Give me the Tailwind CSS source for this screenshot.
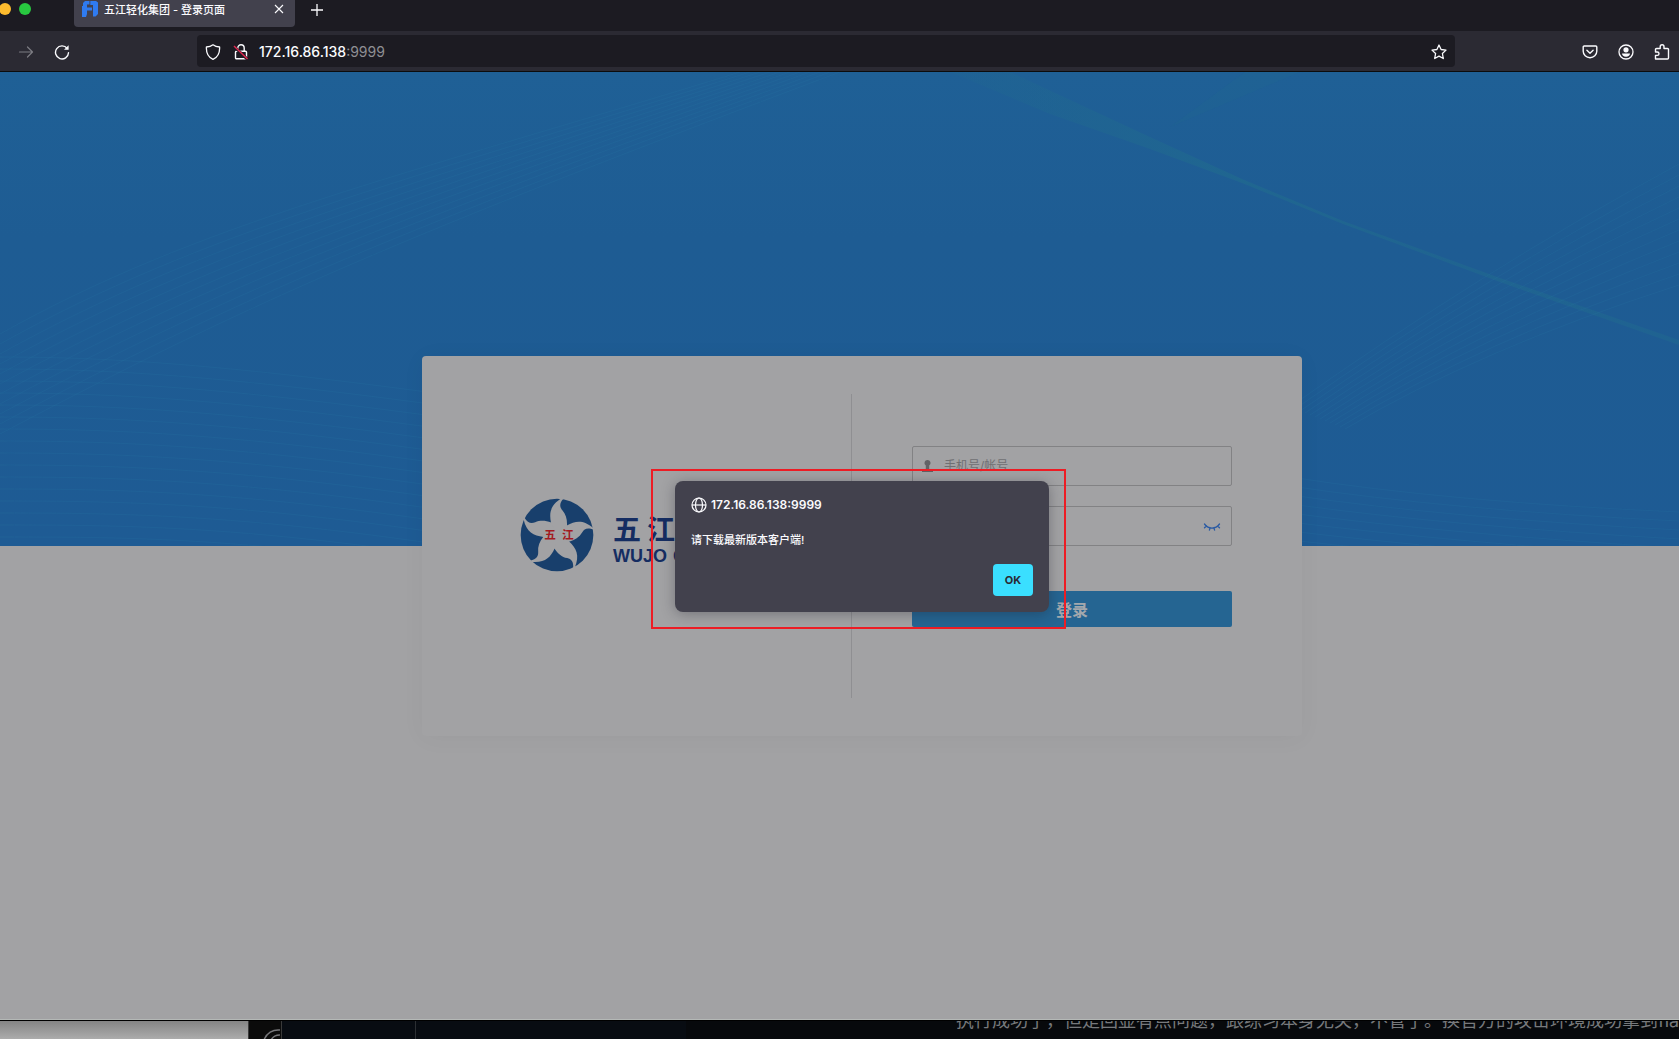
<!DOCTYPE html>
<html lang="zh-CN">
<head>
<meta charset="utf-8">
<meta name="viewport" content="width=device-width, initial-scale=1">
<title>五江轻化集团 - 登录页面</title>
<script src="https://cdn.jsdelivr.net/npm/@tailwindcss/browser@4"></script>
</head>
<body class="h-screen overflow-hidden bg-[#07090c] font-[Inter,'Noto_Sans_CJK_SC',sans-serif]">
<div class="flex h-full flex-col">

  <!-- tab strip -->
  <header class="flex h-[31px] shrink-0 items-start bg-[#1c1b22] text-[#fbfbfe]">
    <div class="flex w-[74px] shrink-0 pt-[3px]">
      <svg class="h-3 w-8" viewBox="0 0 32 12" aria-hidden="true"><circle cx="5" cy="6" r="6" fill="#febc2e"/><circle cx="25" cy="6" r="6" fill="#28c840"/></svg>
    </div>
    <div class="flex h-[27px] w-[221px] items-start rounded-b-sm bg-[#42414d] pt-px pr-2 pl-2">
      <svg class="h-4 w-4 shrink-0" viewBox="0 0 16 16" fill="#2f7bf0" aria-hidden="true"><path d="M3 0h4.500v3.500H5v3h5v3H5V13l-1 3H0V5h1V2z"/><path d="M8.300 0H14l2 1.500V13l-2.500 2.500H11V4H8.300z"/></svg>
      <span class="grow pl-[6px] text-[11px] leading-[18px] font-medium">五江轻化集团 - 登录页面</span>
      <button class="h-4 w-4" aria-label="关闭标签页"><svg viewBox="0 0 16 16" fill="none" stroke="#fbfbfe" stroke-width="1.100"><path d="M4 4l8 8M12 4l-8 8"/></svg></button>
    </div>
    <button class="mt-0.5 ml-[14px] h-4 w-4" aria-label="新建标签页"><svg viewBox="0 0 16 16" fill="none" stroke="#fbfbfe" stroke-width="1.300"><path d="M8 2v12M2 8h12"/></svg></button>
  </header>

  <!-- navigation toolbar -->
  <nav class="flex h-[41px] shrink-0 items-center border-b border-[#0c0c0d] bg-[#2b2a33] text-[#fbfbfe]">
    <div class="flex w-[197px] shrink-0 gap-5 pt-px pl-[18px]">
      <button class="h-4 w-4 text-[#7d7c83]" aria-label="前进"><svg viewBox="0 0 16 16" fill="none" stroke="currentColor" stroke-width="1.200" stroke-linecap="round" stroke-linejoin="round"><path d="M1.500 8h13M9.500 3l5 5-5 5"/></svg></button>
      <button class="h-4 w-4" aria-label="刷新"><svg viewBox="0 0 16 16" fill="none" stroke="currentColor" stroke-width="1.400" stroke-linecap="round"><path d="M13.200 4.500A6.500 6.500 0 1 0 14.500 8.700"/><path d="M14.600 1.200v4.600h-4.600z" fill="currentColor" stroke="none"/></svg></button>
    </div>
    <div class="flex h-8 grow items-center rounded bg-[#1c1b22] px-2 pt-px">
      <svg class="h-4 w-4" viewBox="0 0 16 16" fill="none" stroke="currentColor" stroke-width="1.300" stroke-linejoin="round" aria-hidden="true"><path d="M8 .8C6.200 2.200 4 2.900 1.400 3c-.3 5.500 1.600 10 6.600 12.300C13 13 14.900 8.500 14.600 3 12 2.900 9.800 2.200 8 .8z"/></svg>
      <svg class="ml-3 h-4 w-4" viewBox="0 0 16 16" fill="none" aria-hidden="true"><path d="M4.800 7V4a3.200 3.200 0 0 1 6.400 0v3M3.500 7.200h9a1 1 0 0 1 1 1v5.600a1 1 0 0 1-1 1h-9a1 1 0 0 1-1-1V8.200a1 1 0 0 1 1-1z" stroke="#fbfbfe" stroke-width="1.400"/><path d="M1 2.500l13.500 12.800" stroke="#1c1b22" stroke-width="3"/><path d="M1 2l13.500 13" stroke="#e22850" stroke-width="1.400"/></svg>
      <div role="textbox" aria-label="地址栏" class="grow pl-[10px] text-[14px] leading-5 font-medium">172.16.86.138<span class="font-normal text-[#8f8f94]">:9999</span></div>
      <button class="h-4 w-4" aria-label="添加书签"><svg viewBox="0 0 16 16" fill="none" stroke="currentColor" stroke-width="1.300" stroke-linejoin="round"><path d="M8 1l2.100 4.500 4.900.6-3.600 3.400.9 5L8 12.100l-4.300 2.400.9-5L1 6.100l4.900-.6z"/></svg></button>
    </div>
    <div class="flex shrink-0 gap-5 pt-px pr-[9px] pl-[127px]">
      <button class="h-4 w-4" aria-label="Pocket"><svg viewBox="0 0 16 16" fill="none" stroke="currentColor" stroke-width="1.400" stroke-linecap="round" stroke-linejoin="round"><path d="M2.200 2h11.600a1 1 0 0 1 1 1v4.300a6.800 6.400 0 0 1-13.600 0V3a1 1 0 0 1 1-1z"/><path d="M4.900 6.200L8 9.200l3.100-3"/></svg></button>
      <button class="h-4 w-4" aria-label="账户"><svg viewBox="0 0 16 16" fill="none" stroke="currentColor" stroke-width="1.300"><circle cx="8" cy="8" r="7"/><circle cx="8" cy="5.800" r="2.600" fill="currentColor" stroke="none"/><path d="M4 9.500h8c0 2-1.700 3.200-4 3.200s-4-1.200-4-3.200z" fill="currentColor" stroke="none"/></svg></button>
      <button class="h-4 w-4" aria-label="扩展"><svg viewBox="0 0 16 16" fill="none" stroke="currentColor" stroke-width="1.400" stroke-linejoin="round"><path d="M1.500 15h12a1 1 0 0 0 1-1V5.500a1 1 0 0 0-1-1H10V2.700a1.900 1.900 0 0 0-3.800 0v1.800H2.500a1 1 0 0 0-1 1V8h1.800a1.700 1.700 0 0 1 0 3.400H1.500z"/></svg></button>
    </div>
  </nav>

  <!-- page -->
  <main class="relative flex grow flex-col overflow-hidden border-b border-[#b4b8b6] bg-[#a2a2a4]">
    <svg class="absolute inset-x-0 top-0 h-[474px] w-full" viewBox="0 0 1679 474" preserveAspectRatio="none" aria-hidden="true">
      <defs>
        <linearGradient id="sky" x1="0" y1="0" x2="0" y2="1"><stop offset="0" stop-color="#1f6096"/><stop offset=".35" stop-color="#1e5c93"/><stop offset="1" stop-color="#1e5b94"/></linearGradient>
        <linearGradient id="beam" x1="0" y1="0" x2="1" y2="0"><stop offset="0" stop-color="#20698f" stop-opacity=".2"/><stop offset=".4" stop-color="#20698f" stop-opacity=".75"/><stop offset="1" stop-color="#20698f" stop-opacity=".5"/></linearGradient>
      </defs>
      <path fill="url(#sky)" d="M0 0h1679v474H0z"/>
      <path fill="url(#beam)" d="M950 0h60L1150 65 1242 107 1343 149 1500 206 1679 268V273L1500 210 1343 152 1242 111 1150 77 1050 42z"/>
      <path fill="#20738f" fill-opacity=".12" d="M1245 0h55l-130 55z"/>
      <g id="waves" fill="none" stroke="#2a78a4" stroke-opacity=".2"></g>
    </svg>

    <div class="relative flex pt-[284px] pl-[45px]">
      <section class="mx-auto flex h-[380px] w-[880px] items-center rounded bg-[#a2a2a4] shadow-[0_2px_24px_rgba(0,0,0,0.04)]">
        <div class="flex h-[304px] w-[430px] shrink-0 items-center border-r border-[#8f8f92] pb-[22px] pl-[98px]">
          <div class="flex items-center gap-[19px] whitespace-nowrap text-[#152d62]">
            <svg class="h-[74px] w-[74px] shrink-0" viewBox="-111 -111 222 222" role="img" aria-label="五江">
              <defs><path id="petal" d="M-10-10L-18-37C-24-66-20-90 14-110L20-110C6-94 8-84 16-74 27-62 31-46 30-28L10-10Z"/></defs>
              <circle r="109" fill="#183f6c"/>
              <g fill="#a2a2a4"><circle r="41"/><use href="#petal"/><use href="#petal" transform="rotate(72)"/><use href="#petal" transform="rotate(144)"/><use href="#petal" transform="rotate(216)"/><use href="#petal" transform="rotate(288)"/></g>
              <g fill="#a3191f" font-family="Noto Sans CJK SC, sans-serif" font-weight="700" font-size="35"><text x="-38" y="12">五</text><text x="15" y="12">江</text></g>
            </svg>
            <div class="flex flex-col pt-[10px]">
              <p class="flex gap-1.5 text-[28px] leading-8 font-bold"><span>五</span><span>江</span></p>
              <p class="flex gap-1.5 font-['Liberation_Sans',sans-serif] text-[18px] leading-5 font-bold"><span>WUJO</span><span>G</span></p>
            </div>
          </div>
        </div>
        <form class="flex grow flex-col pr-[70px] pb-5 pl-[60px]" onsubmit="return false">
          <div class="flex h-10 items-center rounded-xs border border-[#828284] px-2">
            <label for="account"><svg class="h-[14px] w-[13px]" viewBox="0 0 13 14" role="img" aria-label="帐号"><path fill="#626265" d="M6.500 1a3 3 0 0 1 1.700 5.500V11H12v2H1v-2h3.800V6.500A3 3 0 0 1 6.500 1z"/></svg></label>
            <input id="account" type="text" placeholder="手机号/帐号" class="h-full w-full bg-transparent pl-[10px] text-[12px] leading-4 placeholder:text-[#707073] outline-none">
          </div>
          <div class="mt-5 flex h-10 items-center rounded-xs border border-[#828284] px-2">
            <label for="password" class="sr-only">密码</label>
            <input id="password" type="password" class="h-full w-full bg-transparent pl-6 text-[12px] outline-none">
            <button type="button" aria-label="显示密码" class="mr-px h-4 w-5 shrink-0"><svg viewBox="0 0 20 16" fill="none" stroke="#2b5ba3" stroke-width="1.300" stroke-linecap="round"><path d="M2.500 6c4 5.500 11 5.500 15 0M4.500 8l-2 1.800M8 10l-.6 2.200M12 10l.6 2.200M15.500 8l2 1.800"/></svg></button>
          </div>
          <button type="submit" class="mt-[45px] h-9 rounded-xs bg-[#256592] pt-0.5 text-[16px] leading-5 font-bold text-[#a3a8ad]">登录</button>
        </form>
      </section>
    </div>

    <!-- alert dialog and its highlight frame -->
    <div class="absolute inset-x-0 top-[409px] flex pl-[45px]">
      <div role="alertdialog" aria-labelledby="origin" aria-describedby="message" class="mx-auto flex h-[131px] w-[374px] flex-col rounded-lg bg-[#42414d] p-4 text-[#fbfbfe] shadow-[0_2px_14px_rgba(30,30,40,0.35)]">
        <h1 id="origin" class="flex items-center gap-1 text-[12px] leading-4 font-semibold">
          <svg class="h-4 w-4" viewBox="0 0 16 16" fill="none" stroke="currentColor" stroke-width="1.200" aria-hidden="true"><circle cx="8" cy="8" r="7"/><ellipse cx="8" cy="8" rx="3.500" ry="7"/><path d="M1 8h14"/></svg>
          172.16.86.138:9999
        </h1>
        <p id="message" class="mt-[19px] text-[11px] leading-4 font-medium">请下载最新版本客户端!</p>
        <button class="mt-auto h-8 w-10 self-end rounded bg-[#3adfff] text-[11px] font-bold text-[#2b2a33]">OK</button>
      </div>
    </div>
    <div class="pointer-events-none absolute inset-x-0 top-[397px] flex pl-[38px]"><div class="mx-auto h-[160px] w-[415px] border-2 border-[#ed1c24]"></div></div>
  </main>

  <!-- windows behind the browser -->
  <footer class="flex h-[19px] shrink-0 overflow-hidden border-t border-black">
    <div class="w-[248px] shrink-0 bg-linear-to-b from-[#858585] to-[#acacac]"></div>
    <div class="flex w-[34px] shrink-0 justify-end border-x border-[#3a3a3a] bg-[#0b0b0b]"><svg class="h-[18px] w-[18px]" viewBox="0 0 18 18" fill="none" stroke="#77777a" stroke-width="1.500"><path d="M1 19A15 15 0 0 1 17 9M8 19a10 10 0 0 1 9-5"/></svg></div>
    <div class="w-[134px] shrink-0 border-r border-[#2c2f33] bg-[#080c12]"></div>
    <div class="w-[270px] shrink-0 bg-[#080c12]"></div>
    <div class="flex grow items-end overflow-hidden bg-[#07090c] pl-[270px]"><p class="mb-[6px] text-[18px] leading-6 whitespace-nowrap text-[#77797c]">执行成功了，但是回显有点问题，跟练习本身无关，不管了。换官方的攻击环境成功拿到flag</p></div>
  </footer>
</div>
<script>
  // Fine wave lines over the blue banner
  const d = [];
  for (let i = 0; i < 11; i++) d.push(`M0 ${262 + i * 10}C${200 + i * 5} ${150 + i * 8} 400 ${105 + i * 6} ${740 + i * 10} 0`);
  for (let i = 0; i < 16; i++) d.push(`M0 ${285 + i * 12}C150 ${285 + i * 12} 300 ${300 + i * 11} 640 ${350 + i * 12}`);
  for (let i = 0; i < 12; i++) d.push(`M${1290 + i * 5} ${335 + i * 2}Q1480 ${200 + i * 7} 1679 ${92 + i * 11}`);
  for (let i = 0; i < 8; i++) d.push(`M1290 ${405 + i * 9}Q1450 ${430 + i * 8} 1679 ${440 + i * 9}`);
  document.getElementById('waves').innerHTML = `<path d="${d.join('')}"/>`;
</script>
</body>
</html>
